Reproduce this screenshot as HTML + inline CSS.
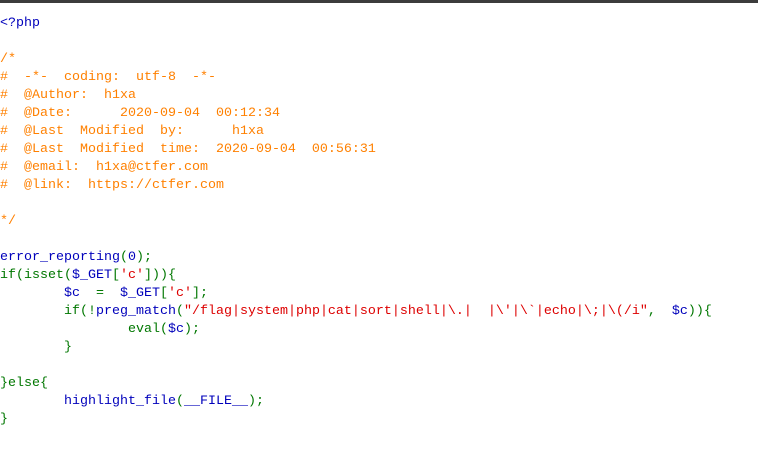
<!DOCTYPE html>
<html><head><meta charset="utf-8"><style>
html,body{margin:0;padding:0;background:#fff;width:758px;height:468px;overflow:hidden}
.bar{position:absolute;left:0;top:0;width:758px;height:3px;background:#3c3c3c}
pre{position:absolute;left:0;top:15px;margin:0;font-family:"Liberation Mono",monospace;font-size:13.33px;line-height:18px;white-space:pre}
.b{color:#0000BB}.o{color:#FF8000}.g{color:#007700}.r{color:#DD0000}
</style></head><body><div class="bar"></div>
<pre><span class="b">&lt;?php</span>

<span class="o">/*
#  -*-  coding:  utf-8  -*-
#  @Author:  h1xa
#  @Date:      2020-09-04  00:12:34
#  @Last  Modified  by:      h1xa
#  @Last  Modified  time:  2020-09-04  00:56:31
#  @email:  h1xa@ctfer.com
#  @link:  https://ctfer.com

*/</span>

<span class="b">error_reporting</span><span class="g">(</span><span class="b">0</span><span class="g">);
if(isset(</span><span class="b">$_GET</span><span class="g">[</span><span class="r">'c'</span><span class="g">])){
        </span><span class="b">$c  </span><span class="g">=  </span><span class="b">$_GET</span><span class="g">[</span><span class="r">'c'</span><span class="g">];
        if(!</span><span class="b">preg_match</span><span class="g">(</span><span class="r">"/flag|system|php|cat|sort|shell|\.|  |\'|\`|echo|\;|\(/i"</span><span class="g">,  </span><span class="b">$c</span><span class="g">)){
                eval(</span><span class="b">$c</span><span class="g">);
        }

}else{
        </span><span class="b">highlight_file</span><span class="g">(</span><span class="b">__FILE__</span><span class="g">);
}</span></pre>
</body></html>
